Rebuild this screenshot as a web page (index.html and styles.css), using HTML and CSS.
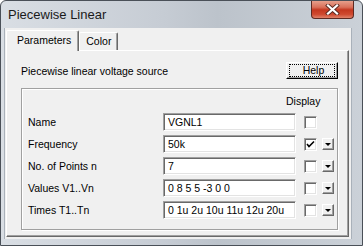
FILE: index.html
```html
<!DOCTYPE html>
<html>
<head>
<meta charset="utf-8">
<link rel="stylesheet" href="styles.css">
</head>
<body>
<div class="window">
  <div class="titlebar">
    <span class="title">Piecewise Linear</span>
    <div class="close">
      <svg width="15" height="11" viewBox="0 0 15 11">
        <path d="M3 1.5 L12 9.5 M12 1.5 L3 9.5" stroke="#5a2a22" stroke-width="4" stroke-linecap="square"/>
        <path d="M3 1.5 L12 9.5 M12 1.5 L3 9.5" stroke="#ffffff" stroke-width="2.2" stroke-linecap="square"/>
      </svg>
    </div>
  </div>
  <div class="client">
    <div class="tabs">
      <div class="tab active">Parameters</div>
      <div class="tab">Color</div>
    </div>
    <div class="panel">
      <div class="head">
        <span>Piecewise linear voltage source</span>
        <div class="btn"><span class="focus">Help</span></div>
      </div>
      <div class="group">
        <div class="display-label">Display</div>
        <div class="row">
          <span class="label">Name</span>
          <div class="input">VGNL1</div>
          <div class="check"></div>
          <div class="dd-empty"></div>
        </div>
        <div class="row">
          <span class="label">Frequency</span>
          <div class="input">50k</div>
          <div class="check">
            <svg width="9" height="9" viewBox="0 0 9 9"><path d="M1 4 L3 6.5 L8 1.5" stroke="#000" stroke-width="1.6" fill="none"/></svg>
          </div>
          <div class="dd"><i></i></div>
        </div>
        <div class="row">
          <span class="label">No. of Points n</span>
          <div class="input">7</div>
          <div class="check"></div>
          <div class="dd"><i></i></div>
        </div>
        <div class="row">
          <span class="label">Values V1..Vn</span>
          <div class="input">0 8 5 5 -3 0 0</div>
          <div class="check"></div>
          <div class="dd"><i></i></div>
        </div>
        <div class="row">
          <span class="label">Times T1..Tn</span>
          <div class="input">0 1u 2u 10u 11u 12u 20u</div>
          <div class="check"></div>
          <div class="dd"><i></i></div>
        </div>
      </div>
    </div>
  </div>
</div>
</body>
</html>
```

FILE: styles.css
```css
html, body {
  margin: 0;
  padding: 0;
  background: #ffffff;
}
.window {
  width: 363px;
  height: 246px;
  box-sizing: border-box;
  border: 1px solid #4a5058;
  border-radius: 6px 6px 0 0;
  background: linear-gradient(90deg, #d9dee4 0%, #c6ccd4 45%, #bcc3cb 60%, #cbd1d8 100%);
  display: flex;
  flex-direction: column;
  font-family: "Liberation Sans", Arial, sans-serif;
  font-size: 10.5px;
  color: #000;
  overflow: hidden;
}
.titlebar {
  height: 27px;
  display: flex;
  align-items: flex-start;
  padding-left: 7px;
  flex-shrink: 0;
}
.title {
  font-size: 13px;
  color: #1a1a1a;
  margin-top: 6px;
}
.close {
  margin-left: auto;
  margin-right: 8px;
  margin-top: -1px;
  width: 43px;
  height: 19px;
  box-sizing: border-box;
  border: 1px solid #5e2a22;
  border-top: none;
  border-radius: 0 0 4px 4px;
  background: linear-gradient(180deg, #e9a793 0%, #d9705a 40%, #c4371f 55%, #cf4a30 80%, #e0826a 100%);
  display: flex;
  align-items: center;
  justify-content: center;
}
.client {
  flex: 1;
  margin: 0 10px 6px 3px;
  background: #f0f0f0;
  padding: 2px 2px 2px 1px;
  display: flex;
  flex-direction: column;
  border-left: 1px solid #a9b1ba;
  border-right: 1px solid #a9b1ba;
}
.tabs {
  display: flex;
  height: 20px;
  align-items: flex-end;
  flex-shrink: 0;
  position: relative;
  z-index: 1;
}
.tab {
  box-sizing: border-box;
  height: 18px;
  padding: 0 6px;
  border-top: 1px solid #ffffff;
  border-left: 1px solid #ffffff;
  border-right: 1px solid #696969;
  box-shadow: inset -1px 0 0 #a0a0a0;
  border-radius: 2px 2px 0 0;
  line-height: 17px;
  background: #f0f0f0;
}
.tab.active {
  height: 21px;
  margin-bottom: -1px;
  padding: 0 7px 0 10px;
  line-height: 19px;
  position: relative;
}
.panel {
  flex: 1;
  border-top: 1px solid #ffffff;
  border-left: 1px solid #ffffff;
  border-right: 1px solid #696969;
  border-bottom: 1px solid #696969;
  box-shadow: inset -1px -1px 0 #a0a0a0;
  padding: 11px 10px 6px 14px;
  display: flex;
  flex-direction: column;
}
.head {
  display: flex;
  align-items: center;
  justify-content: space-between;
  height: 17px;
}
.btn {
  width: 52px;
  height: 17px;
  box-sizing: border-box;
  border-top: 1px solid #ffffff;
  border-left: 1px solid #ffffff;
  border-right: 1px solid #000000;
  border-bottom: 1px solid #000000;
  box-shadow: inset -1px -1px 0 #a0a0a0;
  background: #f0f0f0;
  padding: 1px 2px 1px 2px;
  display: flex;
}
.focus {
  flex: 1;
  box-sizing: border-box;
  height: 13px;
  border: 1px dotted #000;
  text-align: center;
  line-height: 11px;
  padding-left: 3px;
}
.group {
  margin-top: 9px;
  flex: 1;
  border: 1px solid #a0a0a0;
  box-shadow: inset 1px 1px 0 #ffffff, 1px 1px 0 #ffffff;
  padding: 6px 6px 0 6px;
  display: flex;
  flex-direction: column;
  gap: 4px;
}
.display-label {
  padding-left: 258px;
  height: 14px;
  line-height: 13px;
}
.row {
  display: grid;
  grid-template-columns: 135px 133px 13px 12px;
  align-items: center;
  height: 18px;
}
.input {
  height: 18px;
  box-sizing: border-box;
  border-top: 1px solid #a0a0a0;
  border-left: 1px solid #a0a0a0;
  border-right: 1px solid #ffffff;
  border-bottom: 1px solid #ffffff;
  box-shadow: inset 1px 1px 0 #696969, inset -1px -1px 0 #e3e3e3;
  background: #ffffff;
  padding-left: 4px;
  line-height: 16px;
  white-space: nowrap;
  overflow: hidden;
}
.check {
  margin-left: 8px;
  width: 13px;
  height: 13px;
  box-sizing: border-box;
  border-top: 1px solid #a0a0a0;
  border-left: 1px solid #a0a0a0;
  border-right: 1px solid #ffffff;
  border-bottom: 1px solid #ffffff;
  box-shadow: inset 1px 1px 0 #696969, inset -1px -1px 0 #e3e3e3;
  background: #ffffff;
  display: flex;
  align-items: center;
  justify-content: center;
}
.dd, .dd-empty {
  margin-left: 13px;
  width: 12px;
  height: 12px;
  box-sizing: border-box;
}
.dd {
  border-top: 1px solid #ffffff;
  border-left: 1px solid #ffffff;
  border-right: 1px solid #696969;
  border-bottom: 1px solid #696969;
  box-shadow: inset -1px -1px 0 #a0a0a0;
  background: #f0f0f0;
  display: flex;
  align-items: center;
  justify-content: center;
}
.dd i {
  width: 0;
  height: 0;
  border-left: 3px solid transparent;
  border-right: 3px solid transparent;
  border-top: 3px solid #000;
  margin-right: 1px;
}
```
